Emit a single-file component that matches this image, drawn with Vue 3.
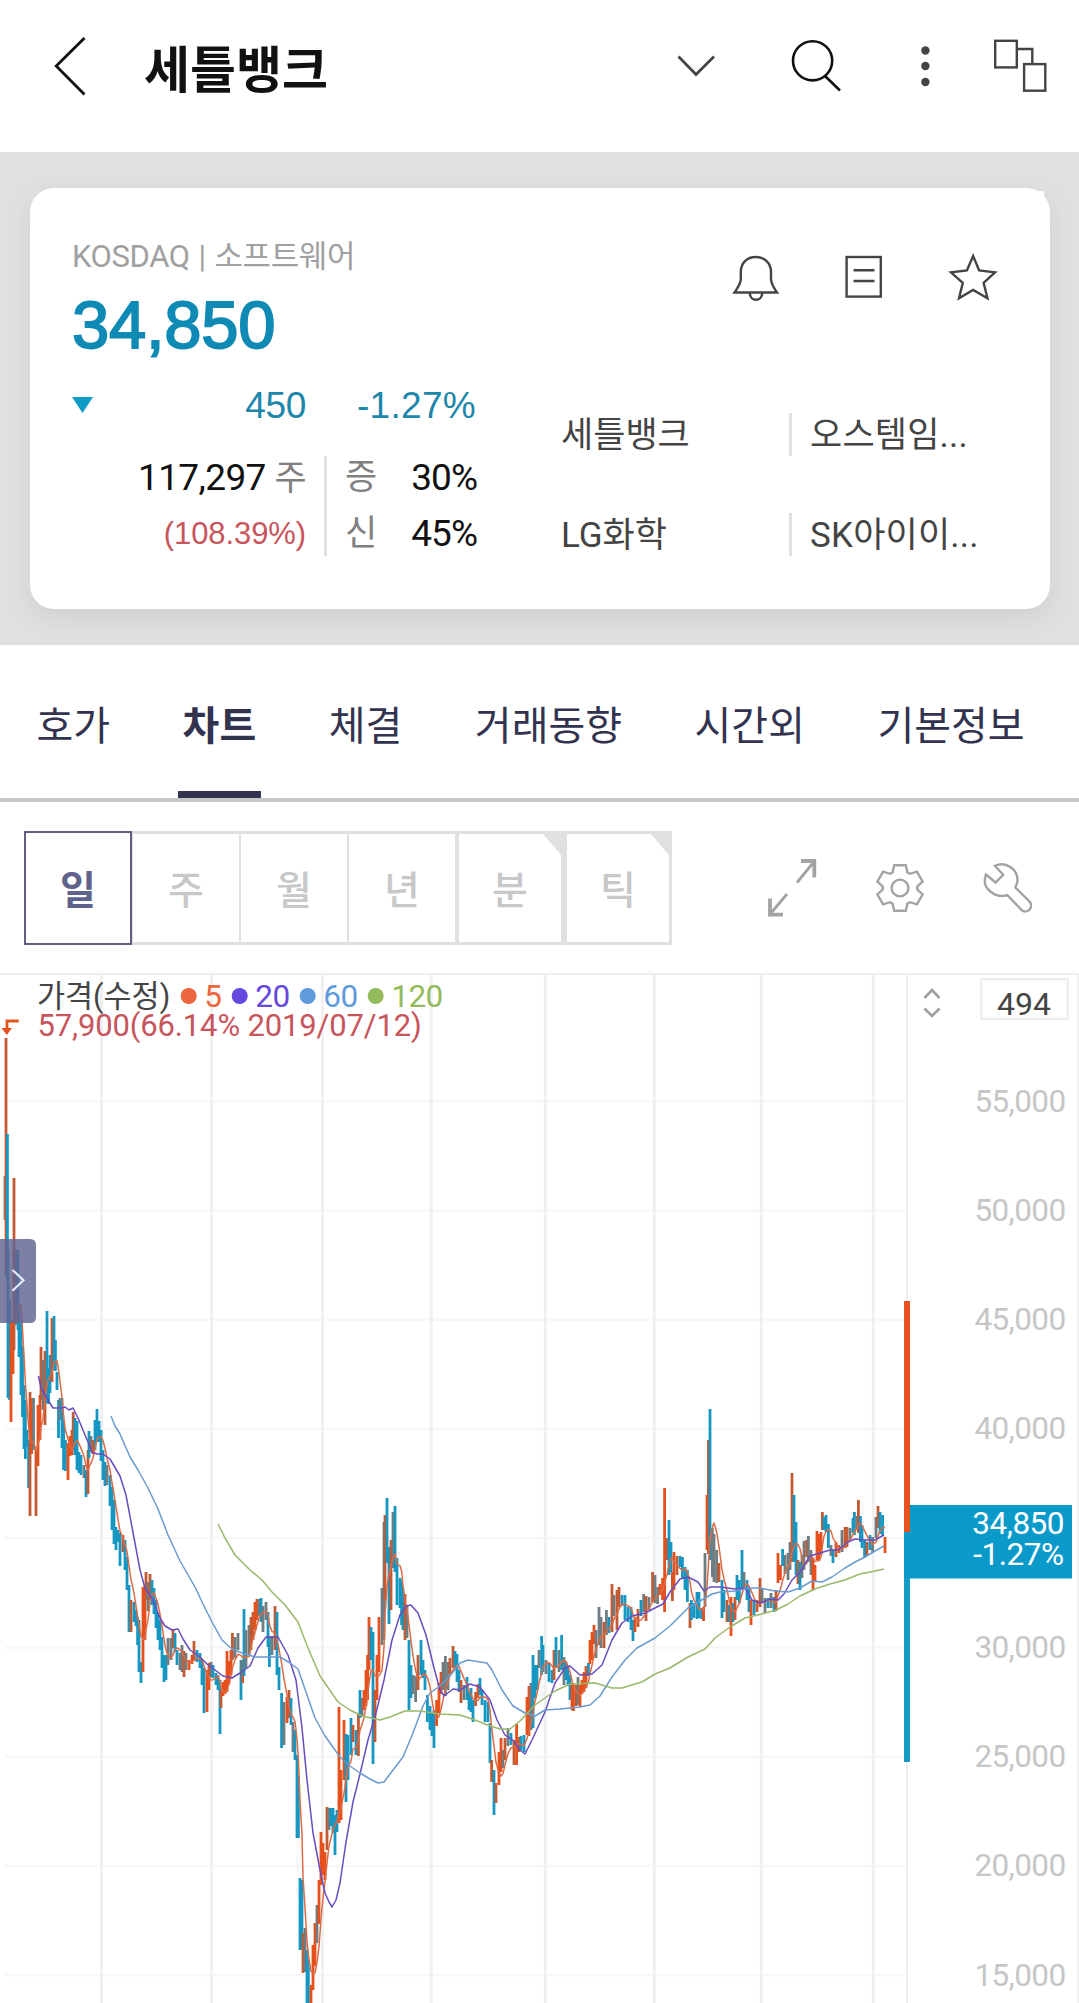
<template>
  <div class="stock-view">
    <!-- 상단 헤더 -->
    <header class="header">
      <svg class="icon back" width="33" height="62" viewBox="0 0 33 62">
        <path d="M30.5 3 L2.2 31 L30.5 59.5" />
      </svg>
      <h1 class="title">세틀뱅크</h1>
      <svg class="icon arrow-down" width="41" height="24" viewBox="0 0 41 24">
        <path d="M2.5 2.5 L20 20.5 L38 2.5" />
      </svg>
      <svg class="icon search" width="52" height="54" viewBox="0 0 52 54">
        <circle cx="21.6" cy="21.8" r="19.6" />
        <path d="M34.5 37.5 L49 51.5" />
      </svg>
      <svg class="dots" width="11" height="42" viewBox="0 0 11 42">
        <circle cx="5.4" cy="5.5" r="4.2" />
        <circle cx="5.4" cy="21" r="4.2" />
        <circle cx="5.4" cy="37" r="4.2" />
      </svg>
      <svg class="icon windows" width="55" height="54" viewBox="0 0 55 54">
        <rect x="2.2" y="1.8" width="21.6" height="26.6" />
        <rect x="31.1" y="25.1" width="21.2" height="26.6" />
        <path d="M24 10 H39.3 V25" />
      </svg>
    </header>

    <!-- 현재가 카드 -->
    <section class="summary">
      <div class="card">
        <div class="quote">
          <p class="market">KOSDAQ | 소프트웨어</p>
          <p class="price">34,850</p>
          <div class="change">
            <svg width="21" height="16" viewBox="0 0 21 16"><path d="M0 0 H21 L10.5 16 Z" fill="#0f9bc8" /></svg>
            <span class="diff">450</span>
            <span class="rate">-1.27%</span>
          </div>
          <div class="stats">
            <div class="volume">
              <p>117,297 <em>주</em></p>
              <p class="ratio">(108.39%)</p>
            </div>
            <div class="margin">
              <p><em>증</em><span>30%</span></p>
              <p><em>신</em><span>45%</span></p>
            </div>
          </div>
        </div>

        <div class="side">
          <div class="side-icons">
            <svg class="icon" width="48" height="48" viewBox="0 0 48 48">
              <path d="M2.5 39.5 C6 34 8.8 31 8.8 26 V19 C8.8 10 15 4 23.8 4 C32.5 4 39 10 39 19 V26 C39 31 41.5 34 45 39.5 Z" />
              <path d="M17.8 40 C17.8 49 30.2 49 30.2 40" />
            </svg>
            <svg class="icon" width="38" height="48" viewBox="0 0 38 48">
              <rect x="1.6" y="4" width="34.2" height="39.6" />
              <path d="M8.5 17.3 H29.5 M8.5 28 H29.5" />
            </svg>
            <svg class="icon" width="50" height="48" viewBox="0 0 50 48">
              <path d="M25.1 3 L31.2 17.5 L47 19.3 L35.6 29.8 L39.5 45.3 L25.1 37 L11 45.3 L14.8 29.8 L3 19.3 L18.9 17.5 Z" />
            </svg>
          </div>
          <div class="names">
            <span v-for="name in recentStocks" :key="name">{{ name }}</span>
          </div>
        </div>
      </div>
    </section>

    <!-- 탭 메뉴 -->
    <nav class="tabs">
      <button
        v-for="tab in tabs"
        :key="tab"
        :class="{ active: tab === activeTab }"
        @click="activeTab = tab"
      >{{ tab }}</button>
    </nav>

    <!-- 주기 선택 -->
    <div class="toolbar">
      <div class="periods">
        <button
          v-for="p in periods"
          :key="p.label"
          :class="{ active: p.label === activePeriod, more: p.more }"
          @click="activePeriod = p.label"
        >{{ p.label }}</button>
      </div>
      <svg class="tool expand" width="50" height="60" viewBox="0 0 50 60">
        <path d="M30 24.5 L46 5 M20 36 L4 55" />
        <path class="head" d="M34 3 H47.3 V19.5 M3 40.5 V56.7 H16" />
      </svg>
      <svg class="tool gear" width="52" height="52" viewBox="-26 -26 52 52">
        <path :d="gearPath" />
        <circle r="8.4" />
      </svg>
      <svg class="tool wrench" width="49" height="52" viewBox="983 862 49 52">
        <path d="M994.8 865.8 C1006 861 1018.5 869 1017.4 882 L1015.4 887.5 L1029.5 901.5 C1034.5 907.5 1027 914.5 1021.5 910 L1007.3 895.2 C996 898.5 980.5 889 986 874.5 L995.6 882.5 L1003.2 874.8 Z" />
      </svg>
    </div>

    <!-- 차트 -->
    <svg class="chart" width="1079" height="1030" viewBox="0 973 1079 1030">
      <g class="grid-x">
        <path v-for="t in ticks" :key="t.y" :d="`M5 ${t.y} H906`" />
      </g>
      <g class="grid-y">
        <path v-for="x in gridX" :key="x" :d="`M${x} 974 V2003`" />
      </g>
      <path class="frame" d="M0 974 H1079 M907 974 V2003 M1078.5 974 V2003" />

      <rect
        v-for="(c, i) in candles"
        :key="i"
        :x="c[0] - 1.4"
        :y="c[1]"
        width="2.8"
        :height="c[2] - c[1]"
        :fill="candleColor[c[3]]"
      />
      <polyline class="ma" :points="ma5" stroke="#dd6b45" />
      <polyline class="ma" :points="ma20" stroke="#6a4cc0" />
      <polyline class="ma" :points="ma60" stroke="#6a9bd0" />
      <polyline class="ma" :points="ma120" stroke="#99b86a" />

      <!-- 범례 -->
      <text x="37" y="1007" class="legend-title">가격(수정)</text>
      <g v-for="m in legend" :key="m.label" :fill="m.color">
        <circle :cx="m.x" cy="996" r="8" />
        <text :x="m.x + 15.5" y="1007" class="legend-num">{{ m.label }}</text>
      </g>
      <text x="37.5" y="1036" class="high">57,900(66.14% 2019/07/12)</text>
      <path d="M18.7 1021 H7 V1030" fill="none" stroke="#e0561f" stroke-width="2.8" />
      <path d="M1.5 1028 H12 L6.8 1035 Z" fill="#e8521f" />

      <!-- 가격 축 -->
      <g class="axis">
        <template v-for="t in ticks" :key="t.y">
          <text v-if="t.label" x="1065.5" :y="t.y + 10.3">{{ t.label }}</text>
        </template>
      </g>
      <path class="sorter" d="M924.5 998 L932 990 L939.5 998 M924.5 1008.5 L932 1016 L939.5 1008.5" />
      <rect x="981.2" y="979.3" width="86.6" height="39.6" fill="#fff" stroke="#eee" stroke-width="2.4" />
      <text x="1024" y="1014.6" class="count">494</text>

      <rect x="904" y="1505" width="168" height="73.5" fill="#0a9aca" />
      <rect x="904" y="1578" width="6" height="184" fill="#149ac3" />
      <rect x="904" y="1301" width="6" height="231" fill="#e8521f" />
      <g class="now">
        <text x="1064" y="1534">34,850</text>
        <text x="1063.5" y="1565">-1.27%</text>
      </g>

      <!-- 왼쪽 열기 버튼 -->
      <path d="M0 1239 H30 Q36 1239 36 1245 V1317 Q36 1323 30 1323 H0 Z" fill="#626391" fill-opacity="0.82" />
      <path d="M12.5 1270 L23.5 1280.3 L12.5 1290.8" fill="none" stroke="#e6eaf8" stroke-width="2.2" />
    </svg>
  </div>
</template>

<script setup>
import { ref } from 'vue'

const tabs = ['호가', '차트', '체결', '거래동향', '시간외', '기본정보']
const activeTab = ref('차트')

const periods = [
  { label: '일' },
  { label: '주' },
  { label: '월' },
  { label: '년' },
  { label: '분', more: true },
  { label: '틱', more: true }
]
const activePeriod = ref('일')

const recentStocks = ['세틀뱅크', '오스템임...', 'LG화학', 'SK아이이...']

const legend = [
  { label: '5', x: 188.7, color: '#ed653c' },
  { label: '20', x: 239.7, color: '#6548dd' },
  { label: '60', x: 307.7, color: '#5f9bdc' },
  { label: '120', x: 375.7, color: '#93ba5c' }
]

// 가격 눈금 (35,000은 현재가 표시에 가려짐)
const ticks = [
  { y: 1101.3, label: '55,000' },
  { y: 1210.5, label: '50,000' },
  { y: 1319.7, label: '45,000' },
  { y: 1429, label: '40,000' },
  { y: 1538, label: '' },
  { y: 1647.5, label: '30,000' },
  { y: 1756.7, label: '25,000' },
  { y: 1866, label: '20,000' },
  { y: 1975.3, label: '15,000' }
]
const gridX = [101.5, 211.7, 322.5, 431.3, 545.3, 654.3, 761.3, 873.3]

// 톱니바퀴: 60도 간격으로 톱니 6개
const tooth = [[-7.4, -15.6], [-5.8, -22.8], [5.8, -22.8], [7.4, -15.6]]
const gearPoints = []
for (let i = 0; i < 6; i++) {
  const a = (i * Math.PI) / 3
  tooth.forEach(([x, y]) => {
    const px = x * Math.cos(a) - y * Math.sin(a)
    const py = x * Math.sin(a) + y * Math.cos(a)
    gearPoints.push(`${px.toFixed(2)} ${py.toFixed(2)}`)
  })
}
const gearPath = 'M' + gearPoints.join(' L') + ' Z'

// u: 상승, d: 하락, m: 혼조
const candleColor = { u: '#e6501c', d: '#1597c2', m: '#6f7d80', b: '#c45a33' }

// x 고가 저가 종류
const raw = `
5 1176 1220 m,6 1038 1275 b,7.4 1134 1280 d,8 1250 1398 d,9.6 1300 1400 d,11 1322 1422 u,13 1320 1374 u,14 1178 1350 b,
16 1249 1325 m,18 1250 1330 d,19 1305 1357 d,21 1322 1395 d,22.5 1346 1417 d,24 1385 1449 d,25.4 1400 1459 d,27 1430 1447 d,
28.6 1440 1488 d,30 1392 1516 b,31.6 1398 1454 u,33.5 1398 1450 m,36 1450 1516 b,38 1405 1466 u,40 1395 1440 u,41 1347 1400 b,
43 1360 1410 m,45 1351 1425 b,47 1311 1403 d,48.5 1368 1404 d,50 1355 1393 d,52 1318 1382 b,54 1316 1370 d,55.4 1340 1371 d,
57 1372 1390 d,58.5 1400 1438 d,60 1398 1420 m,62 1398 1448 d,63.6 1420 1470 d,65.4 1440 1471 d,68 1443 1480 u,70 1436 1456 u,
72 1430 1455 u,73.2 1412 1450 b,75 1418 1455 d,77 1421 1470 d,79 1452 1473 d,81 1455 1475 d,84 1465 1478 m,86 1470 1497 d,
88 1450 1494 b,89 1431 1458 d,91 1436 1452 m,93 1440 1454 u,95 1420 1450 d,97 1409 1442 d,99 1421 1442 d,101 1430 1461 d,
103 1450 1480 d,105 1462 1486 d,107 1465 1485 m,110 1475 1506 d,112 1487 1530 d,114 1500 1544 d,116 1527 1550 d,118 1530 1542 d,
120 1533 1566 d,123 1535 1552 b,125 1540 1570 d,127 1557 1590 d,129 1585 1632 d,131 1600 1632 b,134 1602 1622 d,
136 1610 1626 d,137.6 1617 1645 d,139 1620 1672 d,141 1662 1683 d,143 1587 1672 u,145 1585 1640 u,146 1572 1600 b,148 1582 1611 m,
150 1574 1600 b,152 1580 1605 d,154 1588 1614 d,156 1600 1628 d,158 1613 1640 d,160 1620 1650 d,162 1637 1668 d,164 1655 1682 d,
166 1655 1680 d,168 1638 1665 m,171 1638 1660 m,173 1629 1648 b,175 1633 1652 d,177 1650 1665 d,180 1653 1670 m,182 1645 1672 m,
184 1651 1677 b,186 1653 1670 m,189 1660 1670 u,192 1655 1664 u,194 1641 1661 b,197 1650 1662 d,200 1653 1668 d,202 1660 1685 d,
204 1668 1713 d,207 1670 1712 u,209 1663 1690 u,211 1662 1677 m,213 1665 1678 d,216 1673 1685 d,218 1675 1690 d,220 1680 1734 d,
221 1690 1708 b,223 1682 1696 u,225 1680 1694 u,227 1651 1692 u,229 1661 1684 u,231 1650 1675 u,232.4 1633 1660 b,235 1637 1658 m,
238 1633 1650 m,241 1660 1700 d,242.6 1660 1683 b,244 1609 1676 d,246 1630 1668 m,249 1625 1655 m,251 1617 1650 b,253 1612 1640 b,
255 1602 1630 u,257 1599 1620 u,259 1599 1616 m,261 1598 1622 d,263 1606 1632 m,266 1602 1620 m,268 1612 1647 d,269.4 1637 1667 d,
272 1636 1655 m,275 1606 1650 b,277 1612 1675 d,279 1667 1690 d,281.6 1693 1748 d,284 1702 1745 m,287 1697 1723 u,289 1690 1718 b,
291 1698 1725 d,293 1722 1752 m,295 1730 1760 d,297 1755 1838 d,298.4 1775 1838 d,300 1878 1950 d,302 1880 1950 d,303 1933 1973 b,
305 1928 1972 m,307 1950 2003 d,308.4 1960 2003 d,311 1985 2003 u,313 1945 1990 u,315 1923 1966 u,317 1905 1943 m,319 1880 1924 u,
321 1832 1885 u,323 1843 1875 u,325 1852 1880 u,327 1807 1850 b,329 1808 1830 m,331 1808 1826 d,333 1808 1833 d,335 1815 1855 d,
337 1810 1832 d,339 1707 1823 u,341 1770 1820 u,344 1720 1780 u,346 1734 1802 d,348 1735 1780 d,351 1718 1755 d,353 1725 1742 b,
356 1730 1755 d,358.4 1713 1756 b,360 1690 1718 d,362 1698 1717 m,364 1690 1710 u,366 1670 1706 u,367.6 1655 1700 u,369 1617 1670 u,
371 1627 1660 d,373 1632 1764 d,375 1690 1742 b,377 1655 1700 u,379 1617 1672 u,382 1588 1645 m,384 1522 1640 m,385 1515 1600 b,
387 1498 1563 d,389 1547 1624 d,391 1540 1610 b,393 1512 1568 m,395 1506 1572 d,397 1558 1605 d,400 1578 1608 d,401.6 1580 1625 d,
403 1590 1630 d,405 1594 1640 b,407 1605 1638 m,409 1640 1710 d,411 1665 1698 d,413 1675 1694 m,415.6 1676 1702 m,418 1655 1690 b,
421 1640 1675 d,423 1660 1678 d,425 1670 1690 d,427.4 1695 1722 d,430 1706 1730 d,432 1713 1736 d,434 1710 1748 d,436.6 1700 1726 u,
439 1683 1714 u,441 1672 1694 u,443 1662 1690 m,445.4 1656 1696 m,448 1662 1690 m,450 1658 1674 b,453 1646 1668 b,455 1651 1668 d,
457 1654 1682 d,459 1670 1692 d,461 1680 1703 b,464 1685 1700 m,467 1677 1700 d,469 1692 1710 d,471 1688 1712 d,473 1700 1722 d,
475.6 1692 1706 b,478 1684 1698 u,480 1678 1695 d,482 1690 1705 d,485 1700 1722 d,488 1702 1722 d,490 1723 1763 d,491.6 1760 1782 b,
494 1770 1815 d,496 1783 1803 b,499 1752 1785 u,501 1738 1772 u,503 1750 1768 m,505 1738 1760 b,508 1728 1746 m,511 1733 1745 d,
514 1740 1765 b,516.6 1724 1765 u,519 1737 1752 b,521 1736 1750 d,524 1735 1752 d,527 1697 1735 u,529 1686 1736 u,531 1683 1730 m,
533 1655 1728 d,535 1665 1698 d,537 1665 1690 d,539 1650 1668 m,541.6 1636 1675 d,543 1645 1672 d,546 1660 1674 m,549 1663 1682 d,
552 1670 1683 d,554 1650 1680 b,556 1637 1668 d,559 1650 1672 m,561.6 1635 1670 d,564 1657 1685 m,566 1662 1680 d,568 1667 1686 d,
570 1675 1700 d,572 1683 1710 u,573.4 1684 1711 u,576 1685 1706 b,578 1677 1705 m,580 1685 1707 u,582 1680 1694 u,584 1672 1692 u,
586 1666 1688 u,588.4 1663 1676 d,590 1640 1664 u,592 1632 1660 u,594 1625 1644 u,596 1630 1658 m,599 1607 1645 m,601 1617 1648 m,
604 1622 1648 b,606.4 1610 1635 m,609 1617 1633 d,612 1584 1632 b,614 1595 1616 m,617 1590 1630 b,619 1587 1607 b,622 1595 1606 d,
625 1595 1620 d,628 1607 1622 d,631 1607 1630 d,633 1620 1641 d,635 1617 1632 u,638 1609 1627 b,641 1600 1616 d,643.6 1594 1612 m,
646 1596 1621 b,649 1597 1610 m,652.6 1572 1602 b,655 1575 1603 m,657.6 1587 1604 m,660 1584 1595 u,662.6 1578 1600 u,664.6 1488 1612 u,
667 1538 1560 b,669 1520 1575 d,671 1542 1572 d,672.4 1572 1601 b,674 1552 1590 u,677 1556 1575 b,680 1556 1567 d,682.4 1557 1578 d,
685 1567 1590 d,687.4 1570 1602 d,690 1603 1628 b,691.4 1600 1620 d,694 1603 1618 d,697 1592 1619 d,699 1592 1618 d,701.6 1608 1619 d,
703.6 1607 1621 u,705 1553 1607 m,707 1495 1550 u,708.4 1440 1554 b,710 1409 1560 d,712.4 1528 1577 m,714 1534 1582 m,716.6 1550 1583 m,
719 1563 1582 b,722 1580 1618 d,724 1590 1612 d,727 1600 1622 b,729 1605 1622 d,731 1597 1636 u,733 1603 1622 d,735 1597 1620 b,
737 1575 1600 d,739.4 1580 1603 d,742 1550 1590 d,744 1572 1587 m,747 1580 1600 d,749 1587 1612 d,751 1600 1625 u,754 1600 1615 d,
757 1600 1612 b,760 1578 1607 b,762 1588 1603 m,765 1598 1613 m,768 1598 1608 d,771 1593 1608 m,774 1597 1612 d,776 1590 1611 b,
778 1553 1583 u,780.4 1565 1580 u,782.6 1549 1566 d,785 1555 1574 m,788 1553 1580 m,790 1542 1570 m,792 1473 1562 b,794 1495 1562 d,
796 1522 1575 d,798 1560 1584 b,800 1562 1590 d,802 1555 1578 m,804 1541 1570 m,806.6 1540 1557 b,808.4 1536 1562 m,811 1550 1575 m,
813 1558 1590 u,815 1565 1582 u,817 1531 1560 u,819 1534 1561 u,821 1532 1555 u,822.4 1512 1530 b,824 1517 1530 d,826 1515 1532 d,
828.4 1524 1548 d,831 1545 1556 m,833 1550 1563 d,836 1542 1557 b,839 1545 1553 u,842 1530 1552 m,845 1527 1548 b,847 1527 1547 b,
850 1528 1540 m,853 1518 1533 d,854.4 1512 1535 d,857 1516 1530 m,858.4 1500 1533 b,860.4 1516 1542 d,862 1525 1548 d,864.6 1540 1558 d,
867 1542 1555 b,870 1535 1550 d,872.6 1537 1552 m,876 1517 1538 m,878 1506 1528 b,880 1512 1534 d,882.6 1515 1536 d,885 1537 1553 u
`
const candles = raw.trim().split(',').map((row) => {
  const [x, high, low, type] = row.trim().split(' ')
  return [Number(x), Number(high), Number(low), type]
})

// 5일선은 봉의 중간값으로 계산
const ma5 = candles
  .map((c, i) => {
    if (i < 8) return null
    const part = candles.slice(i - 4, i + 1)
    const avg = part.reduce((sum, p) => sum + (p[1] + p[2]) / 2, 0) / part.length
    return `${c[0]},${avg.toFixed(1)}`
  })
  .filter(Boolean)
  .join(' ')

const ma20 = '38.5,1376 41,1388 48,1400 53,1408 62,1408 65,1407 69,1410 73,1408 78,1418 85,1435 88,1442 92,1452 97,1454 103,1454 110,1459 120,1476 126,1495 132,1527 140,1570 145,1588 153,1600 160,1618 165,1626 172,1630 178,1629 183,1639 190,1650 200,1657 207,1664 215,1670 223,1676 232,1678 240,1673 250,1666 258,1648 266,1637 278,1637 288,1655 296,1680 302,1728 307,1780 313,1833 320,1870 325,1893 329,1902 332,1907 336,1900 340,1883 346,1842 353,1802 360,1774 368,1740 376,1713 384,1680 392,1640 400,1615 406,1606 411,1605 418,1613 426,1635 434,1668 440,1690 444,1696 453,1689 460,1690 470,1684 480,1687 490,1700 497,1720 505,1735 514,1741 520,1750 525,1754 532,1740 545,1712 555,1683 565,1668 570,1666 580,1675 592,1674 602,1665 612,1640 622,1623 632,1616 645,1613 655,1608 663,1604 670,1592 680,1579 688,1577 698,1582 704,1591 710,1587 720,1587 735,1589 745,1588 752,1600 760,1603 770,1599 778,1600 784,1594 792,1580 800,1572 810,1556 820,1553 830,1550 838,1550 848,1542 855,1539 865,1540 875,1540 884,1535'
const ma60 = '111,1416 115,1426 120,1434 130,1457 138,1470 148,1488 158,1509 168,1535 180,1561 195,1587 203,1604 212,1622 222,1640 232,1649 242,1653 255,1657 280,1657 290,1663 298,1669 306,1692 315,1718 325,1736 340,1757 350,1766 360,1773 370,1779 378,1783 384,1782 390,1774 403,1757 413,1733 423,1706 430,1693 440,1686 450,1676 460,1663 468,1660 480,1662 487,1663 492,1670 502,1690 513,1706 525,1713 535,1716 545,1710 560,1709 580,1707 590,1705 600,1696 612,1677 625,1660 637,1648 655,1638 670,1626 688,1608 700,1601 712,1594 720,1592 735,1591 750,1588 760,1588 775,1591 788,1592 800,1588 812,1581 822,1582 832,1577 845,1568 855,1562 865,1557 875,1551 884,1546'
const ma120 = '218,1524 225,1538 235,1555 250,1570 262,1580 272,1592 285,1605 298,1622 308,1648 320,1676 338,1702 350,1710 362,1716 380,1720 390,1717 405,1711 420,1711 440,1714 460,1715 475,1720 490,1726 500,1729 510,1729 520,1721 535,1705 555,1691 570,1684 595,1683 612,1688 622,1688 635,1684 642,1682 655,1674 670,1668 688,1657 705,1649 715,1638 730,1627 745,1618 762,1614 776,1610 788,1604 800,1596 815,1589 830,1584 845,1580 860,1574 870,1572 884,1569'
</script>

<style>
body {
  margin: 0;
  background-color: #fff;
}
</style>

<style scoped>
.stock-view {
  width: 1079px;
  height: 2003px;
  overflow: hidden;
  background-color: #fff;
  font-family: Roboto, 'Noto Sans CJK KR', sans-serif;
  color: #111;
}

p,
h1 {
  margin: 0;
  font-weight: 400;
}

em {
  font-style: normal;
}

button {
  font-family: inherit;
  background: none;
  border: none;
  padding: 0;
  cursor: pointer;
}

svg {
  display: block;
  flex: none;
}

.icon {
  fill: none;
  stroke: #444;
  stroke-width: 2.4;
}

/* 헤더 */
.header {
  display: flex;
  align-items: center;
  height: 132px;
  padding: 0 31px 20px 54px;
}

.back {
  stroke: #111;
  stroke-width: 2.8;
}

.title {
  margin-left: 57px;
  padding-top: 9px;
  font-size: 50px;
  font-weight: 700;
  line-height: 60px;
}

.arrow-down {
  margin-left: auto;
  stroke-width: 2.8;
}

.search {
  margin-left: 74px;
  stroke: #111;
  stroke-width: 2.6;
}

.dots {
  margin-left: 77px;
  fill: #444;
}

.windows {
  margin-left: 62px;
}

/* 현재가 카드 */
.summary {
  box-sizing: border-box;
  height: 493px;
  padding: 36px 29px 36px 30px;
  background-color: #e0e0e0;
  overflow: hidden;
}

.card {
  position: relative;
  display: flex;
  height: 421px;
  background-color: #fff;
  border-radius: 24px;
  box-shadow: 0 8px 24px rgba(0, 0, 0, 0.08);
}

/* 카드 오른쪽 위 각진 모서리 */
.card::after {
  content: '';
  position: absolute;
  top: 3px;
  right: 6px;
  width: 14px;
  height: 14px;
  background-color: #fff;
}

.quote {
  width: 405px;
  padding: 50px 85px 0 42px;
}

.market {
  font-size: 31px;
  line-height: 37px;
  letter-spacing: -0.4px;
  word-spacing: 1.5px;
  color: #a0a0a0;
  white-space: nowrap;
}

.price {
  margin-top: 10px;
  font-family: 'Liberation Sans', sans-serif;
  font-size: 67px;
  line-height: 80px;
  letter-spacing: -0.3px;
  color: #0f8ab5;
  -webkit-text-stroke: 1.8px #0f8ab5;
}

.change {
  display: flex;
  align-items: center;
  height: 40px;
  margin-top: 20px;
  font-family: 'Liberation Sans', sans-serif;
  font-size: 37px;
  line-height: 42px;
  color: #1c87ab;
}

.diff {
  width: 213px;
  padding-top: 2px;
  text-align: right;
  letter-spacing: -0.3px;
}

.rate {
  margin-left: auto;
  padding: 2px 1px 0 0;
  letter-spacing: 0.3px;
}

.stats {
  display: flex;
  height: 100px;
  margin-top: 31px;
  font-size: 37px;
  line-height: 44px;
}

.volume,
.margin {
  display: flex;
  flex-direction: column;
  justify-content: space-between;
}

.volume {
  width: 234px;
  text-align: right;
  letter-spacing: -0.6px;
}

.stats em {
  font-size: 35px;
  color: #808080;
}

.volume .ratio {
  font-family: 'Liberation Sans', sans-serif;
  font-size: 31px;
  letter-spacing: -0.1px;
  color: #c8555c;
}

.margin {
  flex: 1;
  margin-left: 18px;
  padding-left: 18px;
  border-left: 3px solid #e0e0e0;
}

.margin p {
  display: flex;
  justify-content: space-between;
  letter-spacing: -1px;
}

.side-icons {
  display: flex;
  gap: 65px;
  padding: 65px 0 0 170px;
}

.names {
  display: grid;
  grid-template-columns: 227px 230px;
  row-gap: 57px;
  margin-top: 112px;
  font-size: 35px;
  line-height: 46px;
  color: #444;
}

.names span {
  height: 43px;
  text-indent: -1px;
}

.names span:nth-child(even) {
  padding-left: 19px;
  border-left: 3px solid #e0e0e0;
  letter-spacing: 0.2px;
}

/* 탭 */
.tabs {
  display: flex;
  gap: 62.5px;
  padding-left: 31.5px;
  border-bottom: 4px solid #c6c6c6;
}

.tabs button {
  padding: 18px 5px 0;
  border-bottom: 7px solid transparent;
  font-size: 40px;
  line-height: 128px;
  color: #32334f;
  white-space: nowrap;
}

.tabs .active {
  font-weight: 700;
  border-bottom-color: #30324e;
}

/* 주기 선택 */
.toolbar {
  display: flex;
  align-items: center;
  height: 114px;
  padding: 29px 0 28px 24px;
}

.periods {
  display: flex;
}

.periods button {
  box-sizing: border-box;
  position: relative;
  width: 108px;
  height: 114px;
  padding-bottom: 3px;
  border: 3px solid #e0e0e0;
  border-width: 3px 1px;
  font-size: 39px;
  font-weight: 500;
  color: #c8c8c8;
}

.periods .active {
  border: 3px solid #5f6081;
  border-width: 2px;
  font-weight: 700;
  color: #5f628a;
}

.periods .more {
  border-width: 3px;
}

.periods .more::after {
  content: '';
  position: absolute;
  top: 0;
  right: 0;
  border-top: 21px solid #e0e0e0;
  border-left: 18px solid transparent;
}

.tool {
  margin-left: 57px;
  fill: none;
  stroke: #a3a3a3;
  stroke-width: 2.4;
}

.expand {
  margin-left: 95px;
  stroke-width: 2.8;
}

.head {
  stroke-width: 3.8;
}

/* 차트 */
.grid-x path {
  stroke: #f7f7f7;
  stroke-width: 2.4;
}

.grid-y path {
  stroke: #f0f0f0;
  stroke-width: 3;
}

.frame {
  stroke: #eee;
  stroke-width: 2;
}

.ma {
  fill: none;
  stroke-width: 1.5;
  stroke-linejoin: round;
}

.legend-title {
  font-size: 30.5px;
  fill: #444;
}

.legend-num {
  font-size: 31.5px;
  letter-spacing: -0.5px;
}

.high {
  font-size: 31px;
  letter-spacing: -0.15px;
  fill: #c8555c;
}

.axis text {
  font-size: 31.5px;
  letter-spacing: -0.6px;
  text-anchor: end;
  fill: #c6c6c6;
}

.sorter {
  fill: none;
  stroke: #a0a0a0;
  stroke-width: 2.6;
}

.count {
  font-size: 32px;
  text-anchor: middle;
  fill: #444;
}

.now text {
  font-size: 31.5px;
  letter-spacing: -0.5px;
  text-anchor: end;
  fill: #fff;
}
</style>
